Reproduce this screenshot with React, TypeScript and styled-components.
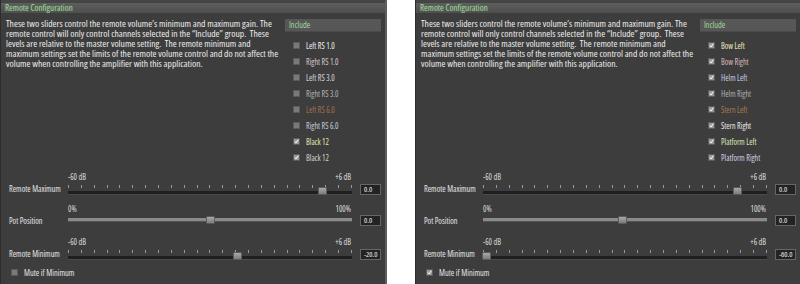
import React from "react";
import styled, { createGlobalStyle } from "styled-components";

const Global = createGlobalStyle`
  html, body { margin: 0; padding: 0; background: #ffffff; }
  body { font-family: "Open Sans", "Noto Sans", sans-serif; font-stretch: 78%; }
`;

const Page = styled.div`
  display: flex;
  gap: 28px;
  width: 800px;
  height: 284px;
  overflow: hidden;
`;

const Panel = styled.div`
  flex: 0 0 386px;
  height: 284px;
  box-sizing: border-box;
  background: #3d3d3d;
  border-left: 1px solid #2c2c2c;
  border-right: 2px solid #5e5e5e;
  display: flex;
  flex-direction: column;
  color: #e6e6e6;
  font-size: 8px;
`;

const TopStrip = styled.div`
  height: 3px;
  background: #454545;
`;

const Header = styled.div`
  height: 10px;
  background: linear-gradient(#5e5e5e, #4f4f4f);
  color: #a2d69c;
  font-size: 9px;
  line-height: 10px;
  padding-left: 4px;
  text-shadow: 0 0 2px rgba(120, 200, 120, 0.35);
`;

const Body = styled.div`
  flex: 1;
  display: flex;
  flex-direction: column;
  padding: 6px 2px 0 5px;
`;

const Top = styled.div`
  display: flex;
  height: 153px;
`;

const Description = styled.p`
  margin: 0;
  flex: 0 0 279px;
  font-size: 9.6px;
  font-stretch: 83%;
  line-height: 10px;
  color: #ececec;
  white-space: pre-wrap;
`;

const Include = styled.div`
  flex: 0 0 96px;
  margin-left: auto;
  margin-right: 2px;
  display: flex;
  flex-direction: column;
`;

const IncludeHeader = styled.div`
  height: 12px;
  background: #575757;
  color: #a2d69c;
  font-size: 8.4px;
  line-height: 12px;
  padding-left: 4px;
  border-bottom: 1px solid #4a4a4a;
`;

const ItemList = styled.div`
  display: flex;
  flex-direction: column;
  gap: 6px;
  padding: 8px 0 0 8px;
`;

const Item = styled.div<{ $color: string }>`
  display: flex;
  align-items: center;
  gap: 6px;
  height: 10px;
  color: ${(p) => p.$color};
  font-size: 8px;
`;

const Box = styled.span<{ $checked: boolean }>`
  width: 7px;
  height: 7px;
  flex: 0 0 7px;
  background: ${(p) => (p.$checked ? "#9a9a9a" : "#7a7a7a")};
  border: 1px solid #5a5a5a;
  box-sizing: border-box;
  display: inline-flex;
  align-items: center;
  justify-content: center;
  svg { display: block; }
`;

const Sliders = styled.div`
  display: flex;
  flex-direction: column;
`;

const SliderRow = styled.div<{ $h: number }>`
  display: grid;
  grid-template-columns: 56px 294px 1fr;
  height: ${(p) => p.$h}px;
  align-items: start;
`;

const RowLabel = styled.div`
  font-size: 8.2px;
  line-height: 10px;
  color: #e6e6e6;
  padding-left: 3px;
  margin-top: 12px;
  white-space: nowrap;
`;

const SliderArea = styled.div`
  display: flex;
  flex-direction: column;
  padding: 0 4px 0 6px;
`;

const Scale = styled.div`
  display: flex;
  justify-content: space-between;
  font-size: 8px;
  color: #dedede;
  height: 10px;
  line-height: 10px;
  padding-right: 1px;
`;

const TrackWrap = styled.div`
  position: relative;
  height: 14px;
`;

const Ticks = styled.div`
  display: flex;
  justify-content: space-between;
  padding-top: 3px;
  height: 3px;
`;

const Tick = styled.span`
  width: 1px;
  height: 3px;
  background: #9a9a9a;
`;

const Track = styled.div<{ $light: boolean }>`
  position: absolute;
  left: 0;
  right: 0;
  top: ${(p) => (p.$light ? "4px" : "9px")};
  height: 3px;
  background: ${(p) => (p.$light ? "#8a8a8a" : "#1f1f1f")};
  border-bottom: 1px solid ${(p) => (p.$light ? "#555" : "#4a4a4a")};
`;

const Thumb = styled.div<{ $light: boolean }>`
  position: absolute;
  top: ${(p) => (p.$light ? "2px" : "5px")};
  width: 9px;
  height: 8px;
  margin-left: -4px;
  box-sizing: border-box;
  background: linear-gradient(#a8a8a8, #7c7c7c);
  border: 1px solid #5c5c5c;
  border-radius: 1px;
`;

const ValueBox = styled.div<{ $light: boolean }>`
  width: 21px;
  height: 11px;
  box-sizing: border-box;
  background: #232323;
  border: 1px solid #666;
  color: #f0f0f0;
  font-size: 7.6px;
  line-height: 9px;
  padding-left: 3px;
  margin-top: ${(p) => (p.$light ? "11px" : "12px")};
  margin-left: 4px;
`;

const Mute = styled.div`
  display: flex;
  align-items: center;
  gap: 6px;
  height: 10px;
  padding-left: 5px;
  font-size: 8.4px;
  color: #e6e6e6;
`;

const Check = () => (
  <svg width="7" height="7" viewBox="0 0 7 7">
    <path d="M1 3.5 L2.8 5.5 L6 1" stroke="#ffffff" strokeWidth="1.4" fill="none" />
  </svg>
);

type ItemT = { label: string; color: string; checked: boolean };
type SliderT = { label: string; min: string; max: string; pos: number; value: string; ticks: boolean; h: number };

const Slider = ({ s }: { s: SliderT }) => (
  <SliderRow $h={s.h}>
    <RowLabel>{s.label}</RowLabel>
    <SliderArea>
      <Scale>
        <span>{s.min}</span>
        <span>{s.max}</span>
      </Scale>
      <TrackWrap>
        {s.ticks && (
          <Ticks>
            {Array.from({ length: 23 }).map((_, i) => (
              <Tick key={i} />
            ))}
          </Ticks>
        )}
        <Track $light={!s.ticks} />
        <Thumb $light={!s.ticks} style={{ left: `${s.pos * 100}%` }} />
      </TrackWrap>
    </SliderArea>
    <ValueBox $light={!s.ticks}>{s.value}</ValueBox>
  </SliderRow>
);

const desc =
  "These two sliders control the remote volume\u2019s minimum and maximum gain. The remote control will only control channels selected in the \u201cInclude\u201d group.  These levels are relative to the master volume setting.  The remote minimum and maximum settings set the limits of the remote volume control and do not affect the volume when controlling the amplifier with this application.";

const ConfigPanel = ({ items, sliders, mute }: { items: ItemT[]; sliders: SliderT[]; mute: boolean }) => (
  <Panel>
    <TopStrip />
    <Header>Remote Configuration</Header>
    <Body>
      <Top>
        <Description>{desc}</Description>
        <Include>
          <IncludeHeader>Include</IncludeHeader>
          <ItemList>
            {items.map((it, i) => (
              <Item key={i} $color={it.color}>
                <Box $checked={it.checked}>{it.checked && <Check />}</Box>
                {it.label}
              </Item>
            ))}
          </ItemList>
        </Include>
      </Top>
      <Sliders>
        {sliders.map((s, i) => (
          <Slider key={i} s={s} />
        ))}
      </Sliders>
      <Mute>
        <Box $checked={mute}>{mute && <Check />}</Box>
        Mute if Minimum
      </Mute>
    </Body>
  </Panel>
);

const leftItems: ItemT[] = [
  { label: "Left RS 1.0", color: "#f2f2f2", checked: false },
  { label: "Right RS 1.0", color: "#d8c8cc", checked: false },
  { label: "Left RS 3.0", color: "#d8d8d8", checked: false },
  { label: "Right RS 3.0", color: "#b4b4b4", checked: false },
  { label: "Left RS 6.0", color: "#a07050", checked: false },
  { label: "Right RS 6.0", color: "#c8ccd8", checked: false },
  { label: "Black 12", color: "#e6e8b0", checked: true },
  { label: "Black 12", color: "#d4d4d4", checked: true },
];

const rightItems: ItemT[] = [
  { label: "Bow Left", color: "#eeeac0", checked: true },
  { label: "Bow Right", color: "#d8b8bc", checked: true },
  { label: "Helm Left", color: "#c8cce8", checked: true },
  { label: "Helm Right", color: "#b0b0b0", checked: true },
  { label: "Stern Left", color: "#a87a50", checked: true },
  { label: "Stern Right", color: "#eeeeee", checked: true },
  { label: "Platform Left", color: "#dce8b8", checked: true },
  { label: "Platform Right", color: "#d0d0e0", checked: true },
];

const leftSliders: SliderT[] = [
  { label: "Remote Maximum", min: "-60 dB", max: "+6 dB", pos: 0.895, value: "0.0", ticks: true, h: 32 },
  { label: "Pot Position", min: "0%", max: "100%", pos: 0.5, value: "0.0", ticks: false, h: 33 },
  { label: "Remote Minimum", min: "-60 dB", max: "+6 dB", pos: 0.595, value: "-20.0", ticks: true, h: 30 },
];

const rightSliders: SliderT[] = [
  { label: "Remote Maximum", min: "-60 dB", max: "+6 dB", pos: 0.895, value: "0.0", ticks: true, h: 32 },
  { label: "Pot Position", min: "0%", max: "100%", pos: 0.49, value: "0.0", ticks: false, h: 33 },
  { label: "Remote Minimum", min: "-60 dB", max: "+6 dB", pos: 0.01, value: "-60.0", ticks: true, h: 30 },
];

export default function App() {
  return (
    <>
      <Global />
      <Page>
        <ConfigPanel items={leftItems} sliders={leftSliders} mute={false} />
        <ConfigPanel items={rightItems} sliders={rightSliders} mute={true} />
      </Page>
    </>
  );
}
